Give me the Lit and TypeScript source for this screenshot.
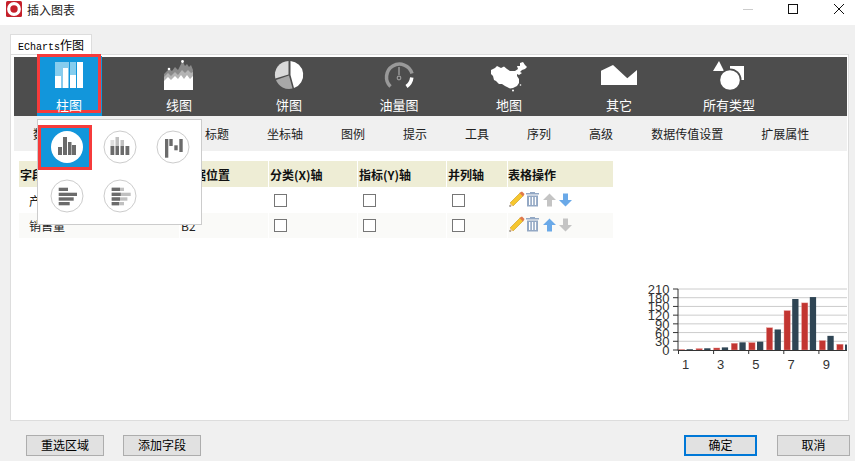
import { LitElement, html, svg, css } from "lit";
import { customElement } from "lit/decorators.js";

const RED = [2.0, 4.9, 7.0, 23.2, 25.6, 76.7, 135.6, 162.2, 32.6, 20.0, 6.4, 3.3];
const DARK = [2.6, 5.9, 9.0, 26.4, 28.7, 70.7, 175.6, 182.2, 48.7, 18.8, 6.0, 2.3];

const bandIcons = [
  svg`<rect x="55" y="62" width="6.5" height="26" fill="#fff"/><rect x="55" y="62" width="6.5" height="14" fill="#86cdee"/>
      <rect x="62.5" y="62" width="6" height="26" fill="#fff"/><rect x="62.5" y="62" width="6" height="6" fill="#86cdee"/>
      <rect x="70" y="62" width="6" height="26" fill="#fff"/><rect x="70" y="62" width="6" height="13" fill="#86cdee"/>
      <rect x="77" y="62" width="6" height="26" fill="#fff"/>`,
  svg`<polygon points="164,74 169,69 172,71 175,67 178,70 182.5,61 185,66 187,64 189,67 191,65 193,70 193,84 164,84" fill="#8a8a8a"/>
      <polygon points="164,77 168,73 171,76 175,72 178,75 182,70 185,73 188,70 191,73 193,72 193,84 164,84" fill="#b4b4b4"/>
      <polygon points="164,81 168,77 171,80 175,76 178,79 181,75 184,79 187,75 190,79 193,76 193,90 164,90" fill="#fff"/>
      <circle cx="169" cy="69" r="1.3" fill="#fff"/><circle cx="182.5" cy="61.5" r="1.4" fill="#fff"/>`,
  svg`<path d="M290.500 61 A14 14 0 0 1 294 88.100 L290.500 75 Z" fill="#fff"/>
      <path d="M292.500 88.600 A14 14 0 0 1 276 80 L289 75.500 Z" fill="#a8a8a8"/>
      <path d="M275.300 78.500 A14 14 0 0 1 288.500 61 L288.500 74.500 Z" fill="#d9d9d9"/>`,
  svg`<path d="M390.500 86.500 A13 13 0 1 1 412 73.500" fill="none" stroke="#999" stroke-width="3.500"/>
      <path d="M411.800 77.500 A13 13 0 0 1 406.500 86.500" fill="none" stroke="#fff" stroke-width="3.500"/>
      <path d="M399 67 V75" stroke="#999" stroke-width="1.500"/><circle cx="399" cy="78" r="1.800" fill="none" stroke="#999" stroke-width="1.200"/>`,
  svg`<polygon fill="#fff" points="491,70 495,68 497,66 501,68 504,66.500 507,69 510,71 515,71 518,69 517,66 520,66 520,63 523,62 525,65 527,67 525,69 522,70 520,72 522,73 519,75 517,74 517,76 519,79 519,83 517,86 513,88 510,88.500 507,87 505,86 502,84 499,84 496,81 494,80 493,76 491,74"/>
      <circle cx="513" cy="90.500" r="1" fill="#fff"/><circle cx="520.500" cy="85" r=".8" fill="#fff"/>`,
  svg`<polygon fill="#fff" points="601,70.700 613,65 627.300,78.300 637,70 637,85 601,85"/>`,
  svg`<polygon fill="#fff" points="713,71 719,61 724,71"/><rect x="730" y="66" width="14" height="14" fill="#fff"/>
      <circle cx="730" cy="80" r="11.500" fill="#4d4d4d"/><circle cx="730" cy="80" r="9.800" fill="#fff"/>`,
];
const bandItems = ["柱图", "线图", "饼图", "油量图", "地图", "其它", "所有类型"];
const bandCenters = [69, 179, 289, 399, 509, 619, 729];
const subTabs = ["标题", "坐标轴", "图例", "提示", "工具", "序列", "高级", "数据传值设置", "扩展属性"];

const rect = (x: number, y: number, w: number, h: number, fill: string) =>
  svg`<rect x=${x} y=${y} width=${w} height=${h} fill=${fill}/>`;
const D = "#6b6b6b";
const L = "#c0c0c0";
const popupGlyphs = [
  [rect(-9, 0, 4, 8, D), rect(-4, -10, 4, 18, D), rect(1, -5, 3.500, 13, D), rect(5, -2, 4, 10, D)],
  [rect(-9.500, -1, 3.800, 9, D), rect(-9.500, -7, 3.800, 6, "#ddd"),
   rect(-4.500, -1, 3.500, 9, D), rect(-4.500, -10, 3.500, 9, L),
   rect(.500, -1, 3.500, 9, D), rect(.500, -7, 3.500, 6, L),
   rect(5.500, -1, 3.800, 9, D)],
  [rect(-8, -8, 3.300, 18.700, D), rect(-3.700, -8, 3.400, 7, D), rect(1.300, -1.700, 3.400, 5, D), rect(6.300, -8, 3.400, 13, D)],
  [rect(-8.300, -8.300, 9.300, 3.300, D), rect(-8.300, -3.300, 18.300, 3.300, D), rect(-8.300, 1.300, 15, 3.400, D), rect(-8.300, 6, 11, 3.300, D)],
  [rect(-8.300, -8.300, 12.300, 3.300, L), rect(-8.300, -8.300, 8.300, 3.300, D),
   rect(-8.300, -3.300, 19, 3.300, L), rect(-8.300, -3.300, 9, 3.300, D),
   rect(-8.300, 1.300, 15.700, 3.400, L), rect(-8.300, 1.300, 8.300, 3.400, D),
   rect(-8.300, 6, 12.300, 3.300, L), rect(-8.300, 6, 7.300, 3.300, D)],
];

const arrow = (up: boolean, fill: string) => html`<svg class="ic" width="13" height="14" viewBox="0 0 13 14">
  <polygon fill=${fill} points=${up ? "6.500,0.500 13,7 9,7 9,13.500 4,13.500 4,7 0,7" : "4,0.500 9,0.500 9,7 13,7 6.500,13.500 0,7 4,7"}/></svg>`;
const BLUE = "#6aa9e8";
const GREY = "#c4c4c4";

@customElement("app-root")
export class AppRoot extends LitElement {
  static styles = css`
    :host { display: block; width: 855px; height: 461px; overflow: hidden; background: #f0f0f0;
      font: 12px/17px "Noto Sans CJK SC", "Liberation Sans", sans-serif; color: #111; }
    .root { display: flex; flex-direction: column; height: 461px; }
    .title { height: 25px; background: #fff; display: flex; align-items: flex-start; flex: none; }
    .logo { margin: 1px 5px 0 6px; display: block; }
    .title-text { line-height: 19px; color: #222; }
    .win { margin-left: auto; display: flex; }
    .win svg { display: block; }
    .body { padding: 9px 6px 0 10px; flex: none; }
    .tab { width: 82px; height: 20px; box-sizing: border-box; background: #fff; border: 1px solid #ddd; border-bottom: none;
      padding-left: 7px; line-height: 20px; white-space: nowrap; color: #000; }
    .tab b { font: 10px/20px "Liberation Mono", monospace; }
    .panel { position: relative; height: 367px; box-sizing: border-box; background: #fff; border: 1px solid #ddd;
      padding: 2px 1px 0 3px; display: flex; flex-direction: column; }
    .band { height: 59px; background: #4d4d4d; display: flex; flex: none; }
    .item { width: 110px; display: flex; flex-direction: column; align-items: center; color: #fff; font-size: 13px; position: relative; }
    .item svg { display: block; margin-top: 2px; position: relative; z-index: 1; }
    .item span { margin-top: 3px; line-height: 18px; position: relative; z-index: 1; }
    .item.on::before { content: ""; position: absolute; left: 23px; width: 65px; top: -1px; bottom: 0; background: #1296db; }
    .item.on::after { content: ""; position: absolute; left: 23px; width: 64px; top: -3px; height: 59px; box-sizing: border-box; border: 3px solid #f63b3b; }
    .sub { height: 35px; background: #f0f0f0; display: flex; align-items: center; gap: 38px; padding-left: 19px; flex: none; color: #222; }
    .sub i { width: 72px; }
    .content { flex: 1; display: flex; flex-direction: column; padding: 10px 0 0 5px; min-height: 0; }
    .grid { display: grid; width: 594px; grid-template-columns: 160px 88px 88px 88px 60px 105px; grid-template-rows: 26px 26px 25px; column-gap: 1px; }
    .h { background: #eeedd5; font-weight: 700; display: flex; align-items: center; padding-left: 1px; color: #111; white-space: nowrap; }
    .c { display: flex; align-items: center; white-space: nowrap; color: #222; }
    .c.alt { background: #fafaf8; }
    .c.name { padding-left: 10px; }
    .c.pos { padding-left: 1px; }
    .box { width: 13px; height: 13px; box-sizing: border-box; border: 1px solid #767676; background: #fff; margin-left: 5px; }
    .c.ops { gap: 1px; padding: 4px 0 0 1px; align-items: flex-start; box-sizing: border-box; }
    .c.ops.alt { padding-top: 3px; }
    .ops svg { display: block; }
    .ops .ic { margin: 1.500px 0 0 2.500px; }
    .chart { display: block; margin-top: auto; margin-bottom: 44px; align-self: flex-end; }
    .chart text { font: 13px "Liberation Sans", sans-serif; fill: #333; }
    .popup { position: absolute; left: 26px; top: 64px; width: 165px; height: 106px; box-sizing: border-box; background: #fff;
      border: 1px solid #ccc; padding: 2px 0 0 3px; display: grid; grid-template-columns: repeat(3, 52px); grid-auto-rows: 49px; column-gap: 1px; }
    .pi { position: relative; display: flex; align-items: center; justify-content: center; }
    .pi svg { display: block; position: relative; }
    .pi.sel::before { content: ""; position: absolute; left: -3px; top: 3px; width: 54px; height: 45px; box-sizing: border-box;
      border: 3px solid #f63b3b; background: #1296db; }
    .foot { flex: 1; display: flex; padding: 14px 5px 0 26px; gap: 19px; }
    .btn { width: 78px; height: 21px; box-sizing: border-box; background: #e1e1e1; border: 1px solid #adadad; font-size: 12px; line-height: 18px; text-align: center; color: #000; }
    .btn.wide { width: 73px; }
    .btn.primary { border: 2px solid #0078d7; line-height: 16px; margin-left: auto; margin-right: 1px; }
    .trash { margin-top: 1px; }
  `;

  private pencil() {
    return html`<svg width="16" height="16" viewBox="0 0 16 16">
      <polygon points="1,12 11,2 14,5 4,15" fill="#f6c62e" stroke="#c99a18" stroke-width=".6"/>
      <polygon points="11,1.500 13,0.500 15.500,3 14.500,5 14,5.500 10.500,2" fill="#e0794a"/>
      <polygon points="1,12 4,15 0.800,15.600" fill="#f4cfa6"/><polygon points="0.700,14 2,15.300 0.500,15.700" fill="#333"/></svg>`;
  }
  private trash() {
    return html`<svg class="trash" width="13" height="15" viewBox="0 0 13 15">
      <rect x="0" y="1" width="13" height="1.500" fill="#93a8c4"/><rect x="4" y="0" width="5" height="1.500" fill="#93a8c4"/>
      <rect x="1" y="3.500" width="11" height="11" fill="#93a8c4"/>
      <rect x="3" y="5" width="1.300" height="8" fill="#fff"/><rect x="5.900" y="5" width="1.300" height="8" fill="#fff"/><rect x="8.800" y="5" width="1.300" height="8" fill="#fff"/></svg>`;
  }
  private chart() {
    const y0 = 349;
    const k = 61 / 210;
    const step = 17.6;
    const ys = [0, 30, 60, 90, 120, 150, 180, 210];
    return html`<svg class="chart" width="207" height="95" viewBox="640 280 207 95">
      ${ys.slice(1).map((v) => svg`<line x1="678" x2="847" y1=${y0 - v * k} y2=${y0 - v * k} stroke="#ccc"/>`)}
      ${RED.map((v, i) => svg`<rect x=${678.4 + i * step} y=${y0 - v * k} width="6.3" height=${v * k} fill="#c23531" stroke="#e8a09e" stroke-width=".4"/>
        <rect x=${686.6 + i * step} y=${y0 - DARK[i] * k} width="6.3" height=${DARK[i] * k} fill="#2f4554"/>`)}
      <line x1="678" x2="678" y1="288" y2=${y0 + .5} stroke="#333"/>
      <line x1="678" x2="847" y1=${y0 + .5} y2=${y0 + .5} stroke="#333"/>
      ${ys.map((v) => svg`<line x1="673" x2="678" y1=${y0 - v * k} y2=${y0 - v * k} stroke="#333"/>
        <text x="669.500" y=${y0 - v * k + 5} text-anchor="end">${v}</text>`)}
      ${[0, 1, 2, 3, 4].map((i) => svg`<line x1=${678.5 + i * 35.1} x2=${678.5 + i * 35.1} y1=${y0} y2="353" stroke="#333"/>
        <text x=${685.500 + i * 35.2} y="368" text-anchor="middle">${2 * i + 1}</text>`)}
    </svg>`;
  }
  render() {
    return html`<div class="root">
      <div class="title">
        <svg class="logo" width="16" height="16" viewBox="0 0 16 16"><rect width="16" height="16" rx="1.500" fill="#c5202b"/><circle cx="8" cy="8" r="5.300" fill="none" stroke="#fff" stroke-width="3.200"/></svg>
        <span class="title-text">插入图表</span>
        <div class="win">
          <svg width="112" height="25" viewBox="743 0 112 25">
            <line x1="743" x2="753" y1="9.500" y2="9.500" stroke="#ccc"/>
            <rect x="788.500" y="4.500" width="9" height="9" fill="none" stroke="#111"/>
            <path d="M834 4 L844 14 M844 4 L834 14" stroke="#111" fill="none"/>
          </svg>
        </div>
      </div>
      <div class="body">
        <div class="tab"><b>ECharts</b>作图</div>
        <div class="panel">
          <div class="band">
            ${bandItems.map((t, i) => html`<div class="item ${i === 0 ? "on" : ""}">
              <svg width="50" height="34" viewBox="${bandCenters[i] - 25} 59 50 34">${bandIcons[i]}</svg>
              <span>${t}</span></div>`)}
          </div>
          <div class="sub"><span>数据</span><i></i>${subTabs.map((t) => html`<span>${t}</span>`)}</div>
          <div class="content">
            <div class="grid">
              <div class="h">字段名称</div><div class="h" style="padding-left:2px">数据位置</div><div class="h">分类(X)轴</div><div class="h">指标(Y)轴</div><div class="h">并列轴</div><div class="h" style="padding-left:0">表格操作</div>
              ${[["产品", "B1"], ["销售量", "B2"]].map(([n, p], r) => {
                const alt = r === 1 ? "alt" : "";
                return html`<div class="c name ${alt}">${n}</div><div class="c pos ${alt}">${p}</div>
                  <div class="c ${alt}"><div class="box"></div></div><div class="c ${alt}"><div class="box"></div></div><div class="c ${alt}"><div class="box"></div></div>
                  <div class="c ops ${alt}">${this.pencil()}${this.trash()}${arrow(true, r === 0 ? GREY : BLUE)}${arrow(false, r === 0 ? BLUE : GREY)}</div>`;
              })}
            </div>
            ${this.chart()}
          </div>
          <div class="popup">
            ${popupGlyphs.map((g, i) => html`<div class="pi ${i === 0 ? "sel" : ""}">
              <svg width="36" height="36" viewBox="-18 -18 36 36"><circle r="16" fill="#fff" stroke=${i === 0 ? "none" : "#ccc"}/>${g}</svg></div>`)}
          </div>
        </div>
      </div>
      <div class="foot">
        <div class="btn">重选区域</div><div class="btn">添加字段</div>
        <div class="btn wide primary">确定</div><div class="btn wide">取消</div>
      </div>
    </div>`;
  }
}
